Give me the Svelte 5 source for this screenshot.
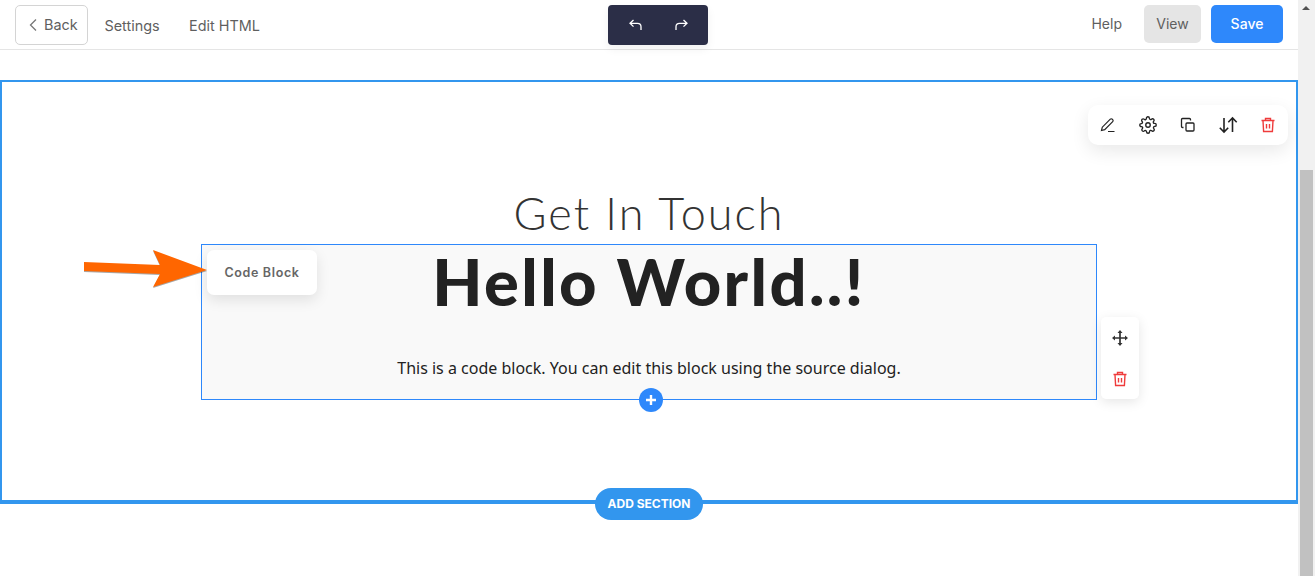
<script>
  const tools = ['pen', 'gear', 'copy', 'sort', 'trash'];
</script>

{#snippet trash()}
  <svg width="18" height="18" viewBox="0 0 18 18" fill="none" stroke="#ef3b3b" stroke-width="1.4">
    <path d="M2.500 4.500h13M6.500 4.500V2.500h5v2M4 4.500l.6 11h8.800l.6-11M7.500 8v4.500M10.500 8v4.500" />
  </svg>
{/snippet}

<div class="app">
  <div class="page">
    <header class="topbar">
      <div class="left">
        <button class="back">
          <svg width="10" height="14" viewBox="0 0 10 14" fill="none" stroke="#777" stroke-width="1.3"><path d="M8 1.500 2.500 7 8 12.500" /></svg>
          Back
        </button>
        <span class="link">Settings</span>
        <span class="link">Edit HTML</span>
      </div>
      <div class="history">
        <svg width="16" height="16" viewBox="0 0 16 16" fill="none" stroke="#fff" stroke-width="1.3"><path d="M5.500 3 2 6.300l3.500 3.300M2 6.300h7.500c2.500 0 3.500 1.500 3.500 3.500V13" /></svg>
        <svg width="16" height="16" viewBox="0 0 16 16" fill="none" stroke="#fff" stroke-width="1.3"><path d="M10.500 3 14 6.300l-3.500 3.300M14 6.300H6.500C4 6.300 3 7.800 3 9.800V13" /></svg>
      </div>
      <div class="right">
        <span class="link help">Help</span>
        <button class="view">View</button>
        <button class="save">Save</button>
      </div>
    </header>

    <main class="canvas">
      <section class="section">
        <div class="toolbar">
          {#each tools as t}
            <span class="tool">
              {#if t === 'pen'}
                <svg width="18" height="18" viewBox="0 0 18 18" fill="none" stroke="#222" stroke-width="1.2"><path d="M2.500 14.500 3.300 11.200 11.300 3.200a1.400 1.400 0 0 1 2 0l.4.400a1.400 1.400 0 0 1 0 2L5.700 13.700zM9 15.500h6.500" /></svg>
              {:else if t === 'gear'}
                <svg width="18" height="18" viewBox="0 0 24 24" fill="none" stroke="#222" stroke-width="1.800"><circle cx="12" cy="12" r="3" /><path d="M19.400 15a1.650 1.650 0 0 0 .33 1.820l.06.06a2 2 0 1 1-2.830 2.830l-.06-.06a1.650 1.650 0 0 0-2.820 1.170V21a2 2 0 0 1-4 0v-.09a1.650 1.650 0 0 0-2.820-1.110l-.06.06a2 2 0 1 1-2.830-2.830l.06-.06a1.650 1.650 0 0 0-1.170-2.820H3a2 2 0 0 1 0-4h.09a1.650 1.650 0 0 0 1.110-2.820l-.06-.06a2 2 0 1 1 2.830-2.830l.06.06a1.650 1.650 0 0 0 2.820-1.170V3a2 2 0 0 1 4 0v.09a1.650 1.650 0 0 0 2.820 1.170l.06-.06a2 2 0 1 1 2.830 2.830l-.06.06a1.650 1.650 0 0 0 1.170 2.820H21a2 2 0 0 1 0 4h-.09a1.650 1.650 0 0 0-1.510 1z" /></svg>
              {:else if t === 'copy'}
                <svg width="18" height="18" viewBox="0 0 18 18" fill="none" stroke="#222" stroke-width="1.300"><rect x="7" y="7" width="8" height="8" rx="1" /><path d="M4.500 11.500H3.500a1 1 0 0 1-1-1v-7a1 1 0 0 1 1-1h7a1 1 0 0 1 1 1V4.500" /></svg>
              {:else if t === 'sort'}
                <svg width="20" height="18" viewBox="0 0 20 18" fill="none" stroke="#222" stroke-width="1.600"><path d="M6 2v14M1.800 11.800 6 16l4.200-4.200M14.500 16V2M10.300 6.200 14.500 2l4.200 4.200" /></svg>
              {:else}
                {@render trash()}
              {/if}
            </span>
          {/each}
        </div>

        <h2 class="title">Get In Touch</h2>

        <div class="block">
          <div class="tag">Code Block</div>
          <h1>Hello World..!</h1>
          <p>This is a code block. You can edit this block using the source dialog.</p>

          <div class="side">
            <svg width="18" height="18" viewBox="0 0 18 18" fill="#333" stroke="#333" stroke-width="1.700">
              <path d="M9 2v14M2 9h14" fill="none" />
              <path d="M9 1 6.500 4h5zM9 17l-2.500-3h5zM1 9l3-2.500v5zM17 9l-3-2.500v5z" stroke="none" />
            </svg>
            {@render trash()}
          </div>

          <span class="plus">
            <svg width="12" height="12" viewBox="0 0 12 12" stroke="#fff" stroke-width="2.400"><path d="M6 1v10M1 6h10" /></svg>
          </span>
        </div>

        <button class="add">ADD SECTION</button>
      </section>

      <svg class="arrow" width="130" height="40" viewBox="0 0 130 40">
        <polygon points="1,12 77,15 70,0 124,20 70,37 77,24 1,21" fill="#ff6600" />
      </svg>
    </main>
  </div>

  <aside class="scrollbar">
    <span class="up"></span>
    <span class="thumb"></span>
  </aside>
</div>

<style>
  :global(body) { margin: 0; background: #fff; overflow: hidden; }
  button { font: inherit; cursor: pointer; }

  .app {
    display: flex; height: 576px; overflow: hidden;
    font-family: Inter, "Liberation Sans", sans-serif; color: #222;
  }
  .page { flex: 1; min-width: 0; position: relative; }

  .topbar {
    display: grid; grid-template-columns: 1fr auto 1fr; align-items: center;
    height: 49px; border-bottom: 1px solid #e5e5e5; padding: 0 15px;
    font-size: 14px; color: #5f5f5f;
  }
  .left { display: flex; align-items: center; gap: 29.500px; font-size: 14.400px; }
  .link { color: #5f5f5f; padding-top: 1px; }
  .back {
    display: flex; align-items: center; gap: 6px;
    width: 73px; height: 40px; padding: 0 0 0 12px; margin-right: -13px;
    background: #fff; color: #5f5f5f; border: 1px solid #d4d4d4; border-radius: 5px;
  }
  .history {
    display: flex; align-items: center; justify-content: center; gap: 29px;
    width: 100px; height: 40px; margin-left: 18px;
    background: #2b2e47; border-radius: 4px;
    box-shadow: 0 4px 10px rgba(0, 0, 0, .06);
  }
  .right { display: flex; justify-content: flex-end; align-items: center; margin-top: -1px; }
  .help { margin-right: 22px; padding-top: 0; padding-bottom: 1px; }
  .view, .save { height: 38px; border: 0; border-radius: 5px; font-size: 14px; padding: 0 0 1px; }
  .view { width: 57px; background: #e5e5e5; color: #5f5f5f; margin-right: 10px; }
  .save { width: 72px; background: #2e88fb; color: #fff; font-weight: 500; }

  .canvas { padding-top: 30px; }
  .section {
    position: relative; box-sizing: border-box; height: 424px;
    border: 2px solid #3296ee; border-bottom-width: 4px;
    padding-top: 105px;
  }
  .toolbar {
    position: absolute; top: 23px; right: 8px;
    display: flex; align-items: center; justify-content: space-between;
    width: 200px; height: 40px; padding: 0 10px; box-sizing: border-box;
    background: #fff; border-radius: 10px;
    box-shadow: 0 6px 18px rgba(0, 0, 0, .09);
  }
  .tool { display: flex; width: 20px; justify-content: center; }

  .title {
    margin: 0; height: 57px; text-align: center;
    font: 300 45px/52px Lato, sans-serif; color: #333; letter-spacing: 2px;
  }
  .block {
    position: relative; box-sizing: border-box;
    width: 896px; height: 156px; margin: 0 auto;
    border: 1px solid #2e88fb; background: #f9f9f9;
    text-align: center;
  }
  .block h1 {
    margin: 0; font: 900 65px/72px Lato, sans-serif; color: #222; letter-spacing: 2.400px;
  }
  .block p {
    margin: 0; padding-top: 38px;
    font: 400 16px/26px "Noto Sans", sans-serif; color: #222;
  }
  .tag {
    position: absolute; left: 5px; top: 5px;
    width: 110px; height: 45px; line-height: 45px;
    background: #fff; border-radius: 7px;
    font-size: 12.500px; font-weight: 600; color: #666; letter-spacing: .65px;
    box-shadow: 0 5px 14px rgba(0, 0, 0, .1);
  }
  .side {
    position: absolute; left: 899px; top: 72px;
    display: flex; flex-direction: column; align-items: center; gap: 23px;
    width: 38px; height: 82px; box-sizing: border-box; padding-top: 12px;
    background: #fff; border-radius: 5px;
    box-shadow: 0 3px 12px rgba(0, 0, 0, .1);
  }
  .plus {
    position: absolute; left: 437px; bottom: -13px;
    display: flex; align-items: center; justify-content: center;
    width: 24px; height: 24px; border-radius: 50%; background: #2e88fb;
  }
  .add {
    position: absolute; left: 593px; bottom: -20px;
    width: 108px; height: 32px; padding: 0 0 2px; border: 0; border-radius: 16px;
    background: #3296ee; color: #fff; font-size: 12px; font-weight: 700;
  }
  .arrow {
    position: absolute; left: 83px; top: 250px;
    filter: drop-shadow(0 1px 0 rgba(0, 0, 0, .35));
  }

  .scrollbar { position: relative; width: 17px; background: #f1f1f1; }
  .up {
    position: absolute; left: 4px; top: 6px;
    border: 4px solid transparent; border-top: 0; border-bottom: 4px solid #505050;
  }
  .thumb { position: absolute; left: 2px; right: 2px; top: 170px; bottom: 0; background: #c1c1c1; }
</style>
